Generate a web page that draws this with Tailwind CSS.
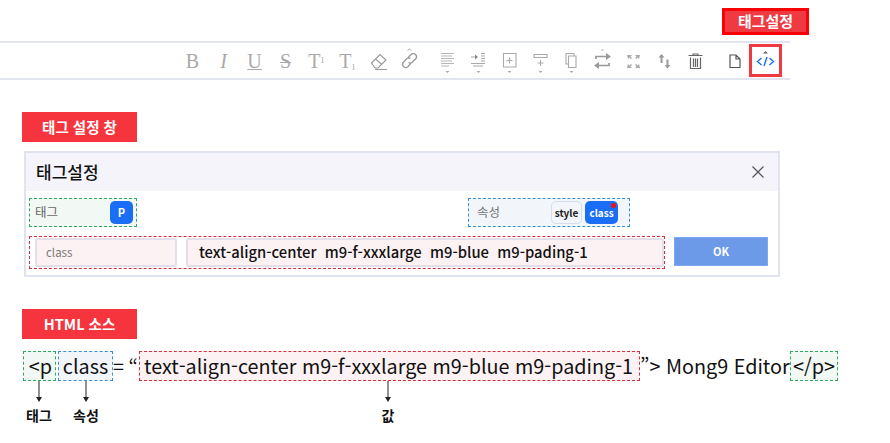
<!DOCTYPE html>
<html lang="ko">
<head>
  <meta charset="UTF-8" />
  <title>태그설정</title>
  <script src="https://cdn.jsdelivr.net/npm/@tailwindcss/browser@4"></script>
</head>
<body class="bg-white w-[890px] h-[443px] overflow-hidden font-['Noto_Sans_CJK_KR','Noto_Sans',sans-serif] text-black">

  <!-- Toolbar -->
  <div class="flex justify-end pt-[8px] w-[809px]">
    <div class="w-[87px] h-[27px] bg-[#ef3a42] border-[3px] border-[#fb0007] text-white text-[15px] font-bold leading-[20px] text-center">태그설정</div>
  </div>
  <div class="mt-[6px] w-[790px] h-[39px] border-y-2 border-[#e2e5f0] relative flex items-center text-[#a9a9a9] font-['Liberation_Serif',serif]">
    <div class="flex items-center pl-[177px] h-full">
      <span class="w-[31px] text-center text-[20px] leading-none">B</span>
      <span class="w-[31px] text-center text-[20px] leading-none italic">I</span>
      <span class="w-[31px] text-center text-[20px] leading-none underline decoration-1">U</span>
      <span class="w-[31px] text-center text-[20px] leading-none line-through decoration-1">S</span>
      <span class="w-[31px] text-center text-[20px] leading-none">T<sup class="text-[9px]">1</sup></span>
      <span class="w-[31px] text-center text-[20px] leading-none">T<sub class="text-[9px]">1</sub></span>
      <svg class="w-[31px] h-[22px]" viewBox="0 0 31 22" fill="none" stroke="#999" stroke-width="1.100"><path d="M8.500 13 L17 4.500 L23 10 L15 18 L12 18 Z M12.500 9 L19 14.500 M12 19.500 H24"/></svg>
      <svg class="w-[31px] h-[26px]" viewBox="0 0 31 26" fill="none" stroke="#999" stroke-width="1.300"><path d="M14 9.500 l3-3 a3 3 0 0 1 4.500 4.500 l-3.500 3.500 a3 3 0 0 1-3.500 0 M17 15 l-3 3.500 a3 3 0 0 1-4.500-4.500 l3.500-3.500 a3 3 0 0 1 3.500 0"/><path d="M13.500 2.500 l2-1.500 2 1.500" stroke-width="0.800"/></svg>
      <svg class="w-[31px] ml-[7px] h-[28px]" viewBox="0 0 31 28" fill="none" stroke="#b5b5b5" stroke-width="1.200"><path d="M9 6.500H22 M9 9H20 M9 11.500H22 M9 14H20 M9 16.500H22 M9 19H17"/><path d="M13.500 24h4l-2 2z" fill="#aaa" stroke="none"/></svg>
      <svg class="w-[31px] h-[28px]" viewBox="0 0 31 28" fill="none" stroke="#aaa" stroke-width="1.200"><path d="M8 10H13 M18 6.500H22 M18 9H22 M18 11.500H22 M18 14H22 M8 16.500H22 M10 19H20"/><path d="M12 7.500l3 2.500-3 2.500z" fill="#888" stroke="none"/><path d="M13.500 24h4l-2 2z" fill="#aaa" stroke="none"/></svg>
      <svg class="w-[31px] h-[28px]" viewBox="0 0 31 28" fill="none" stroke="#aaa" stroke-width="1.100"><path d="M11 6.500H9.500V20H22V6.500H11 M15.500 10.500v6 M12.500 13.500h6"/><path d="M13.500 24h4l-2 2z" fill="#aaa" stroke="none"/></svg>
      <svg class="w-[31px] h-[28px]" viewBox="0 0 31 28" fill="none" stroke="#aaa" stroke-width="1.100"><path d="M9 7.500H22V10.500H9Z M15.500 13v6 M12.500 16h6"/><path d="M13.500 24h4l-2 2z" fill="#aaa" stroke="none"/></svg>
      <svg class="w-[31px] h-[28px]" viewBox="0 0 31 28" fill="none" stroke="#aaa" stroke-width="1.100"><path d="M12 17H10V6.500H18V8.500 M12.500 9H20V20.500H12.500Z"/><path d="M13.500 24h4l-2 2z" fill="#aaa" stroke="none"/></svg>
      <svg class="w-[31px] h-[28px]" viewBox="0 0 31 28" fill="none" stroke="#999" stroke-width="1.700"><path d="M9 12V9.500H20 M22 16V18.500H11"/><path d="M19 6l5 3.500-5 3.500z M12 15l-5 3.500 5 3.500z" fill="#999" stroke="none"/><path d="M13.500 3.500l2-1.500 2 1.500z" fill="#bbb" stroke="none"/></svg>
      <svg class="w-[31px] h-[26px]" viewBox="0 0 31 26" fill="#aaa"><path d="M9 7H14L12.500 8.500 14 10 13 11 11.500 9.500 10 11z M22 7H17L18.500 8.500 17 10 18 11 19.500 9.500 21 11z M9 20H14L12.500 18.500 14 17 13 16 11.500 17.500 10 16z M22 20H17L18.500 18.500 17 17 18 16 19.500 17.500 21 16z"/></svg>
      <svg class="w-[31px] h-[26px]" viewBox="0 0 31 26" fill="#999"><path d="M12.500 6l3 3.500h-2V15h-2V9.500h-2z M18.500 20.500l-3-3.500h2V11.500h2V17h2z"/></svg>
      <svg class="w-[31px] h-[26px]" viewBox="0 0 31 26" fill="none" stroke="#666" stroke-width="1.200"><path d="M8.500 7.500H22.500 M13 7.500V6H18V7.500 M10.500 9.500V20.500H20.500V9.500 M13.500 10.500V19 M15.500 10.500V19 M17.500 10.500V19"/></svg>
      <svg class="w-[31px] ml-[8px] h-[26px]" viewBox="0 0 31 26" fill="none" stroke="#555" stroke-width="1.200"><path d="M11 7H17L21 11V19.500H11Z M17 7V11H21"/></svg>
      <!-- highlighted source button -->
      <div class="w-[33px] h-[33px] ml-[-1px] border-[3px] border-[#ef3a42] flex items-center justify-center">
        <svg class="w-[27px] h-[27px]" viewBox="0 0 27 27" fill="none" stroke="#1a6ef0" stroke-width="1.400"><path d="M9.500 11L5.500 14.500l4 3.500 M17.500 11L21.500 14.500l-4 3.500 M15 10l-3 9"/><path d="M11 6.500l2.500-2.500 2.500 2.500z" fill="#666" stroke="none"/></svg>
      </div>
    </div>
  </div>

  <!-- Dialog section -->
  <div class="pl-[22px] mt-[32px]">
    <div class="w-[115px] h-[30px] bg-[#f5343e] text-white text-[14.500px] font-bold leading-[29px] text-center">태그 설정 창</div>
    <div class="mt-[9px] ml-[2px] w-[756px] h-[126px] border-2 border-[#e0e4f0]">
      <div class="h-[38px] bg-[#f4f4fa] flex items-center justify-between pl-[10px] pr-[13px]">
        <span class="text-[17px] font-medium text-[#111]">태그설정</span>
        <svg class="w-[14px] h-[14px]" viewBox="0 0 14 14" stroke="#555" stroke-width="1.200"><path d="M1.500 1.500L12.500 12.500M12.500 1.500L1.500 12.500"/></svg>
      </div>
      <div class="flex justify-between pl-[3px] pr-[148px] pt-[7px]">
        <div class="w-[108px] h-[29px] border border-dashed border-[#27ae60] bg-[#f2f8f4] flex items-center justify-between pl-[5px] pr-[3px]">
          <span class="text-[12.500px] text-[#666]">태그</span>
          <span class="w-[23px] h-[23px] rounded-[5px] bg-[#1a6ef5] text-white text-[11px] font-bold flex items-center justify-center">P</span>
        </div>
        <div class="w-[162px] h-[29px] border border-dashed border-[#3a8fd0] bg-[#f2f6fb] flex items-center pl-[8px] pr-[11px]">
          <span class="text-[12.500px] text-[#777]">속성</span>
          <span class="ml-auto w-[31px] h-[23px] rounded-[5px] border border-[#d3deee] text-[10px] font-bold text-[#222] flex items-center justify-center">style</span>
          <span class="relative ml-[3px] w-[33px] h-[23px] rounded-[5px] bg-[#1a6ef5] text-white text-[10px] font-bold flex items-center justify-center">class
            <span class="absolute top-[2px] right-[2px] w-[5px] h-[5px] rounded-full bg-[#f01010]"></span>
          </span>
        </div>
      </div>
      <div class="flex items-start pl-[3px] pt-[9px]">
        <div class="w-[636px] h-[33px] border border-dashed border-[#d4303c] flex items-center pl-[5px] gap-[9px]">
          <div class="w-[142px] h-[29px] rounded-[2px] border-2 border-[#e3dfe9] bg-[#fdf2f3] text-[11.500px] text-[#777] flex items-center pl-[9px]">class</div>
          <div class="w-[478px] h-[29px] rounded-[2px] border-2 border-[#e3dfe9] bg-[#fdf2f3] text-[14.800px] font-medium text-[#111] flex items-center pl-[11px] whitespace-pre">text-align-center  m9-f-xxxlarge  m9-blue  m9-pading-1</div>
        </div>
        <div class="ml-[9px] mt-[1px] w-[94px] h-[29px] bg-[#6c9ae8] border border-[#7ba8ef] text-white text-[11px] font-bold flex items-center justify-center">OK</div>
      </div>
    </div>
  </div>

  <!-- HTML source section -->
  <div class="pl-[22px] mt-[32px]">
    <div class="w-[115px] h-[30px] bg-[#f5343e] text-white text-[14.500px] font-bold leading-[29px] text-center">HTML 소스</div>
    <div class="mt-[12px] ml-[1px] flex items-center h-[30px] text-[19.800px] text-[#111] leading-none whitespace-pre">
      <span class="w-[33px] h-[30px] border border-dashed border-[#27ae60] bg-[#f2f8f4] flex items-center justify-end pr-[3px]">&lt;p</span>
      <span class="ml-[2px] w-[55px] h-[30px] border border-dashed border-[#3a8fd0] bg-[#f2f6fb] flex items-center justify-center">class</span>
      <span class="w-[26px]">= “</span>
      <span class="w-[501px] h-[30px] border border-dashed border-[#d4303c] bg-[#fdf2f3] flex items-center pl-[4px]">text-align-center m9-f-xxxlarge m9-blue m9-pading-1</span>
      <span class="w-[150px]">”&gt; Mong9 Editor</span>
      <span class="w-[48px] h-[30px] border border-dashed border-[#27ae60] bg-[#f2f8f4] flex items-center justify-center">&lt;/p&gt;</span>
    </div>
    <div class="flex text-[14px] font-bold text-[#111] ml-[4px]">
      <div class="w-[26px] flex flex-col items-center">
        <svg class="w-[10px] h-[22px]" viewBox="0 0 10 22" stroke="#222"><path d="M5 0V17"/><path d="M2 16h6l-3 5z" fill="#222" stroke="none"/></svg>
        <span class="mt-[3px] leading-[18px] whitespace-nowrap">태그</span>
      </div>
      <div class="ml-[21px] w-[26px] flex flex-col items-center">
        <svg class="w-[10px] h-[22px]" viewBox="0 0 10 22" stroke="#222"><path d="M5 0V17"/><path d="M2 16h6l-3 5z" fill="#222" stroke="none"/></svg>
        <span class="mt-[3px] leading-[18px] whitespace-nowrap">속성</span>
      </div>
      <div class="ml-[276px] w-[26px] flex flex-col items-center">
        <svg class="w-[10px] h-[22px]" viewBox="0 0 10 22" stroke="#222"><path d="M5 0V17"/><path d="M2 16h6l-3 5z" fill="#222" stroke="none"/></svg>
        <span class="mt-[3px] leading-[18px] whitespace-nowrap">값</span>
      </div>
    </div>
  </div>
</body>
</html>
